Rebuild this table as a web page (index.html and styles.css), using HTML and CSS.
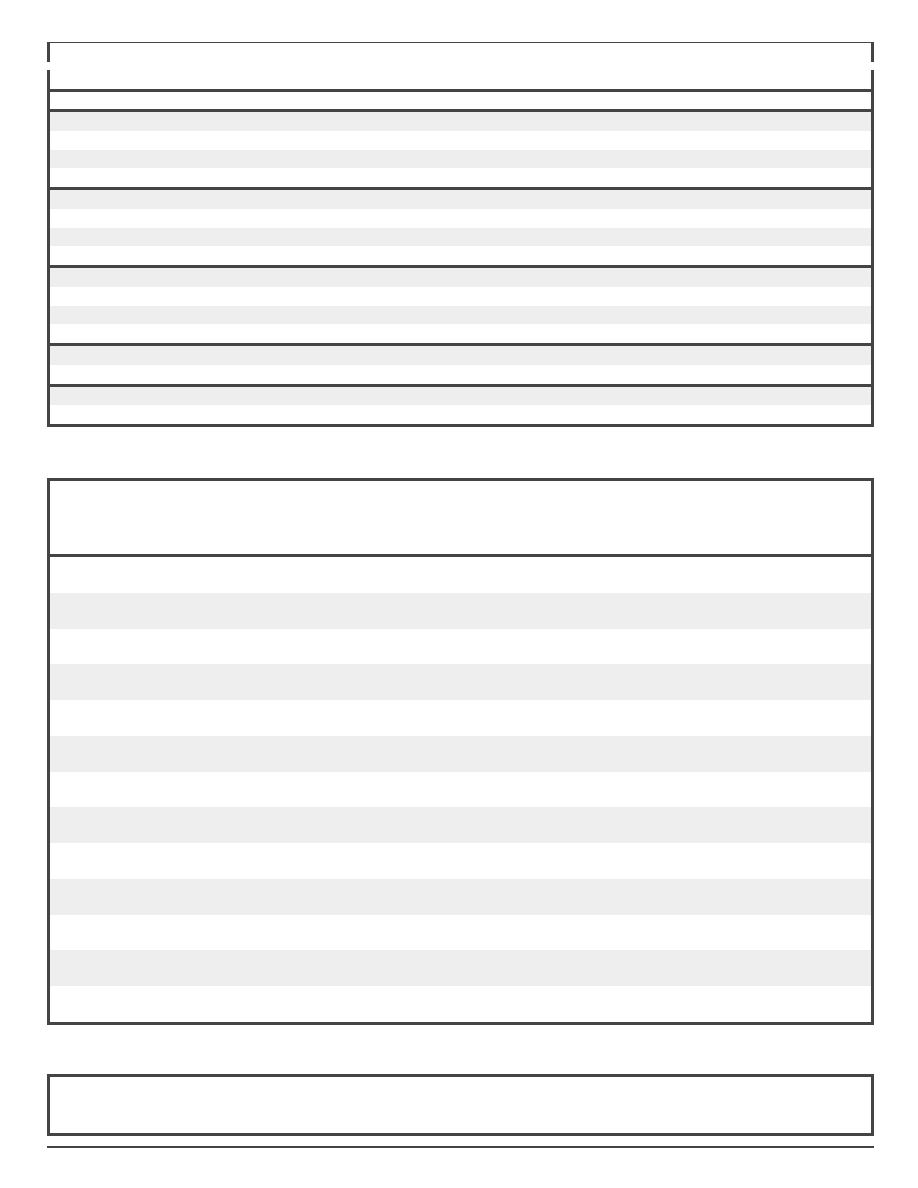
FILE: index.html
```html
<!DOCTYPE html>
<html lang="en">
<head>
<meta charset="utf-8">
<title>Tables</title>
<link rel="stylesheet" href="styles.css">
</head>
<body>
<div class="page">
  <div class="caption-box"></div>

  <div class="table-one">
    <div class="t1-head"></div>
    <div class="rule"></div>
    <div class="t1-sub"></div>
    <div class="rule"></div>
    <div class="group">
      <div class="row1 alt"></div><div class="row1"></div><div class="row1 alt"></div><div class="row1"></div>
    </div>
    <div class="rule"></div>
    <div class="group">
      <div class="row1 alt"></div><div class="row1"></div><div class="row1 alt"></div><div class="row1"></div>
    </div>
    <div class="rule"></div>
    <div class="group">
      <div class="row1 alt"></div><div class="row1"></div><div class="row1 alt"></div><div class="row1"></div>
    </div>
    <div class="rule"></div>
    <div class="group">
      <div class="row1 alt"></div><div class="row1"></div>
    </div>
    <div class="rule"></div>
    <div class="group">
      <div class="row1 alt"></div><div class="row1"></div>
    </div>
  </div>

  <div class="table-two">
    <div class="t2-head"></div>
    <div class="rule"></div>
    <div class="row2"></div>
    <div class="row2 alt"></div>
    <div class="row2"></div>
    <div class="row2 alt"></div>
    <div class="row2"></div>
    <div class="row2 alt"></div>
    <div class="row2"></div>
    <div class="row2 alt"></div>
    <div class="row2"></div>
    <div class="row2 alt"></div>
    <div class="row2"></div>
    <div class="row2 alt"></div>
    <div class="row2"></div>
  </div>

  <div class="box-three"></div>
  <div class="footer-rule"></div>
</div>
</body>
</html>
```
FILE: styles.css
```css
html, body {
  margin: 0;
  padding: 0;
  background: #ffffff;
  font-family: "Liberation Sans", Arial, sans-serif;
}

.page {
  width: 827px;
  margin-left: 47px;
  padding-top: 42px;
  display: flex;
  flex-direction: column;
}

.caption-box {
  box-sizing: border-box;
  height: 20px;
  border-top: 1px solid #444444;
  border-left: 3px solid #444444;
  border-right: 3px solid #444444;
}

.table-one {
  margin-top: 8px;
  display: flex;
  flex-direction: column;
  border-left: 3px solid #444444;
  border-right: 3px solid #444444;
  border-bottom: 3px solid #444444;
}

.rule {
  height: 3px;
  background: #444444;
  flex: none;
}

.t1-head {
  height: 19px;
}

.t1-sub {
  height: 17px;
}

.group {
  display: flex;
  flex-direction: column;
}

.row1 {
  height: 18.75px;
  flex: none;
}

.alt {
  background: #eeeeee;
}

.table-two {
  margin-top: 51px;
  display: flex;
  flex-direction: column;
  border: 3px solid #444444;
}

.t2-head {
  height: 73px;
}

.row2 {
  height: 35.77px;
  flex: none;
}

.box-three {
  margin-top: 49px;
  box-sizing: border-box;
  height: 62px;
  border: 3px solid #444444;
}

.footer-rule {
  margin-top: 10px;
  height: 2px;
  background: #444444;
}
```
